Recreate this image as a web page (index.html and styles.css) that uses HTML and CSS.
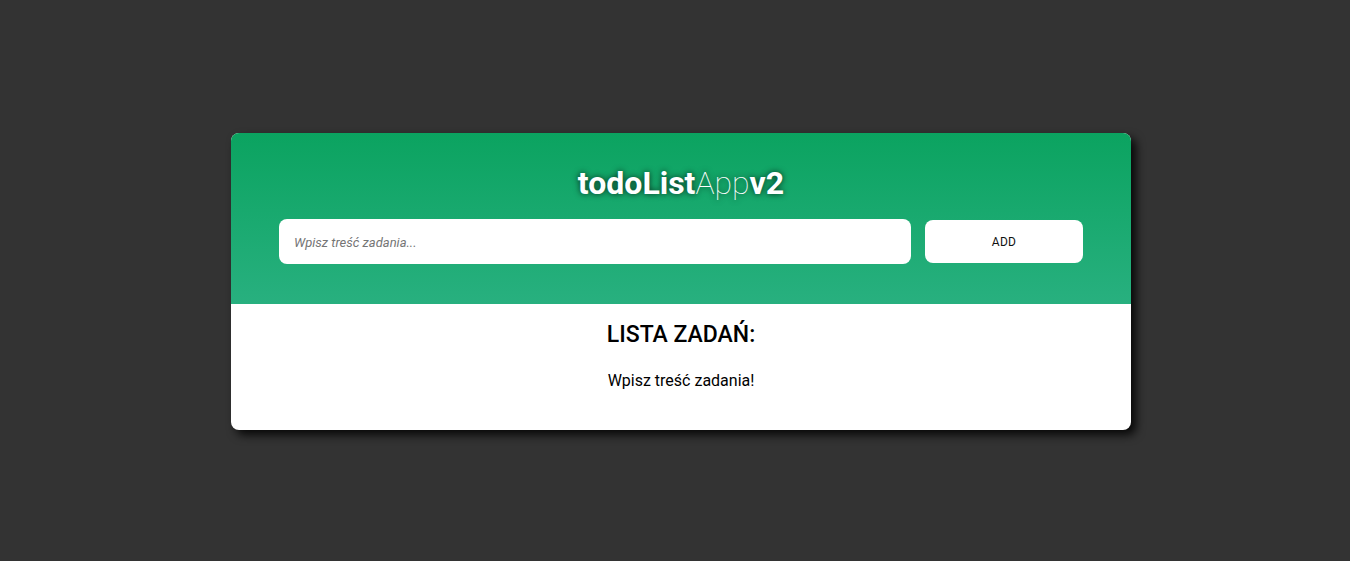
FILE: index.html
```html
<!DOCTYPE html>
<html lang="pl">
<head>
<meta charset="utf-8">
<title>todoListAppv2</title>
<link rel="stylesheet" href="styles.css">
</head>
<body>
<main class="app">
  <header class="app-header">
    <h1 class="title"><b>todoList</b><span class="thin">App</span><b>v2</b></h1>
    <form class="add-form">
      <input class="task-input" type="text" placeholder="Wpisz treść zadania...">
      <button class="add-btn" type="button">ADD</button>
    </form>
  </header>
  <section class="list">
    <h2 class="list-title">LISTA ZADAŃ:</h2>
    <p class="list-empty">Wpisz treść zadania!</p>
  </section>
</main>
</body>
</html>
```

FILE: styles.css
```css
* { box-sizing: border-box; }
html, body { margin: 0; padding: 0; }
body {
  background: #333333;
  font-family: Roboto, "Liberation Sans", sans-serif;
  min-height: 561px;
  display: flex;
  justify-content: center;
  align-items: flex-start;
  padding-top: 133px;
  padding-left: 12px;
}
.app {
  width: 900px;
  background: #fff;
  border-radius: 8px;
  overflow: hidden;
  box-shadow: 5px 5px 10px rgba(0, 0, 0, 0.85);
}
.app-header {
  background: linear-gradient(to bottom, #0ba360 0%, #28b07f 100%);
  padding: 32px 48px 40px;
}
.title {
  margin: 0;
  text-align: center;
  color: #fff;
  font-size: 32px;
  line-height: 37.5px;
  font-weight: 700;
  text-shadow: 0 0 6px rgba(0, 0, 0, 0.75);
}
.title b { font-weight: 700; }
.title .thin { font-weight: 100; }
.add-form {
  margin-top: 16.5px;
  display: flex;
  align-items: center;
  gap: 14px;
}
.task-input {
  flex: 1;
  height: 45px;
  border: none;
  border-radius: 8px;
  padding: 1px 15px 0;
  font-family: Roboto, "Liberation Sans", sans-serif;
  font-size: 13px;
  outline: none;
  background: #fff;
}
.task-input::placeholder {
  font-style: italic;
  color: #757575;
}
.add-btn {
  width: 158px;
  height: 43px;
  border: none;
  border-radius: 8px;
  background: #fff;
  padding-top: 2px;
  font-family: Roboto, "Liberation Sans", sans-serif;
  font-size: 12px;
  color: #111;
  letter-spacing: 0.3px;
}
.list {
  padding: 17px 20px 40px;
  text-align: center;
}
.list-title {
  margin: 0;
  font-size: 23px;
  line-height: 28px;
  font-weight: 500;
  color: #000;
}
.list-empty {
  margin: 22px 0 0;
  font-size: 16px;
  line-height: 19px;
  color: #000;
}
```
